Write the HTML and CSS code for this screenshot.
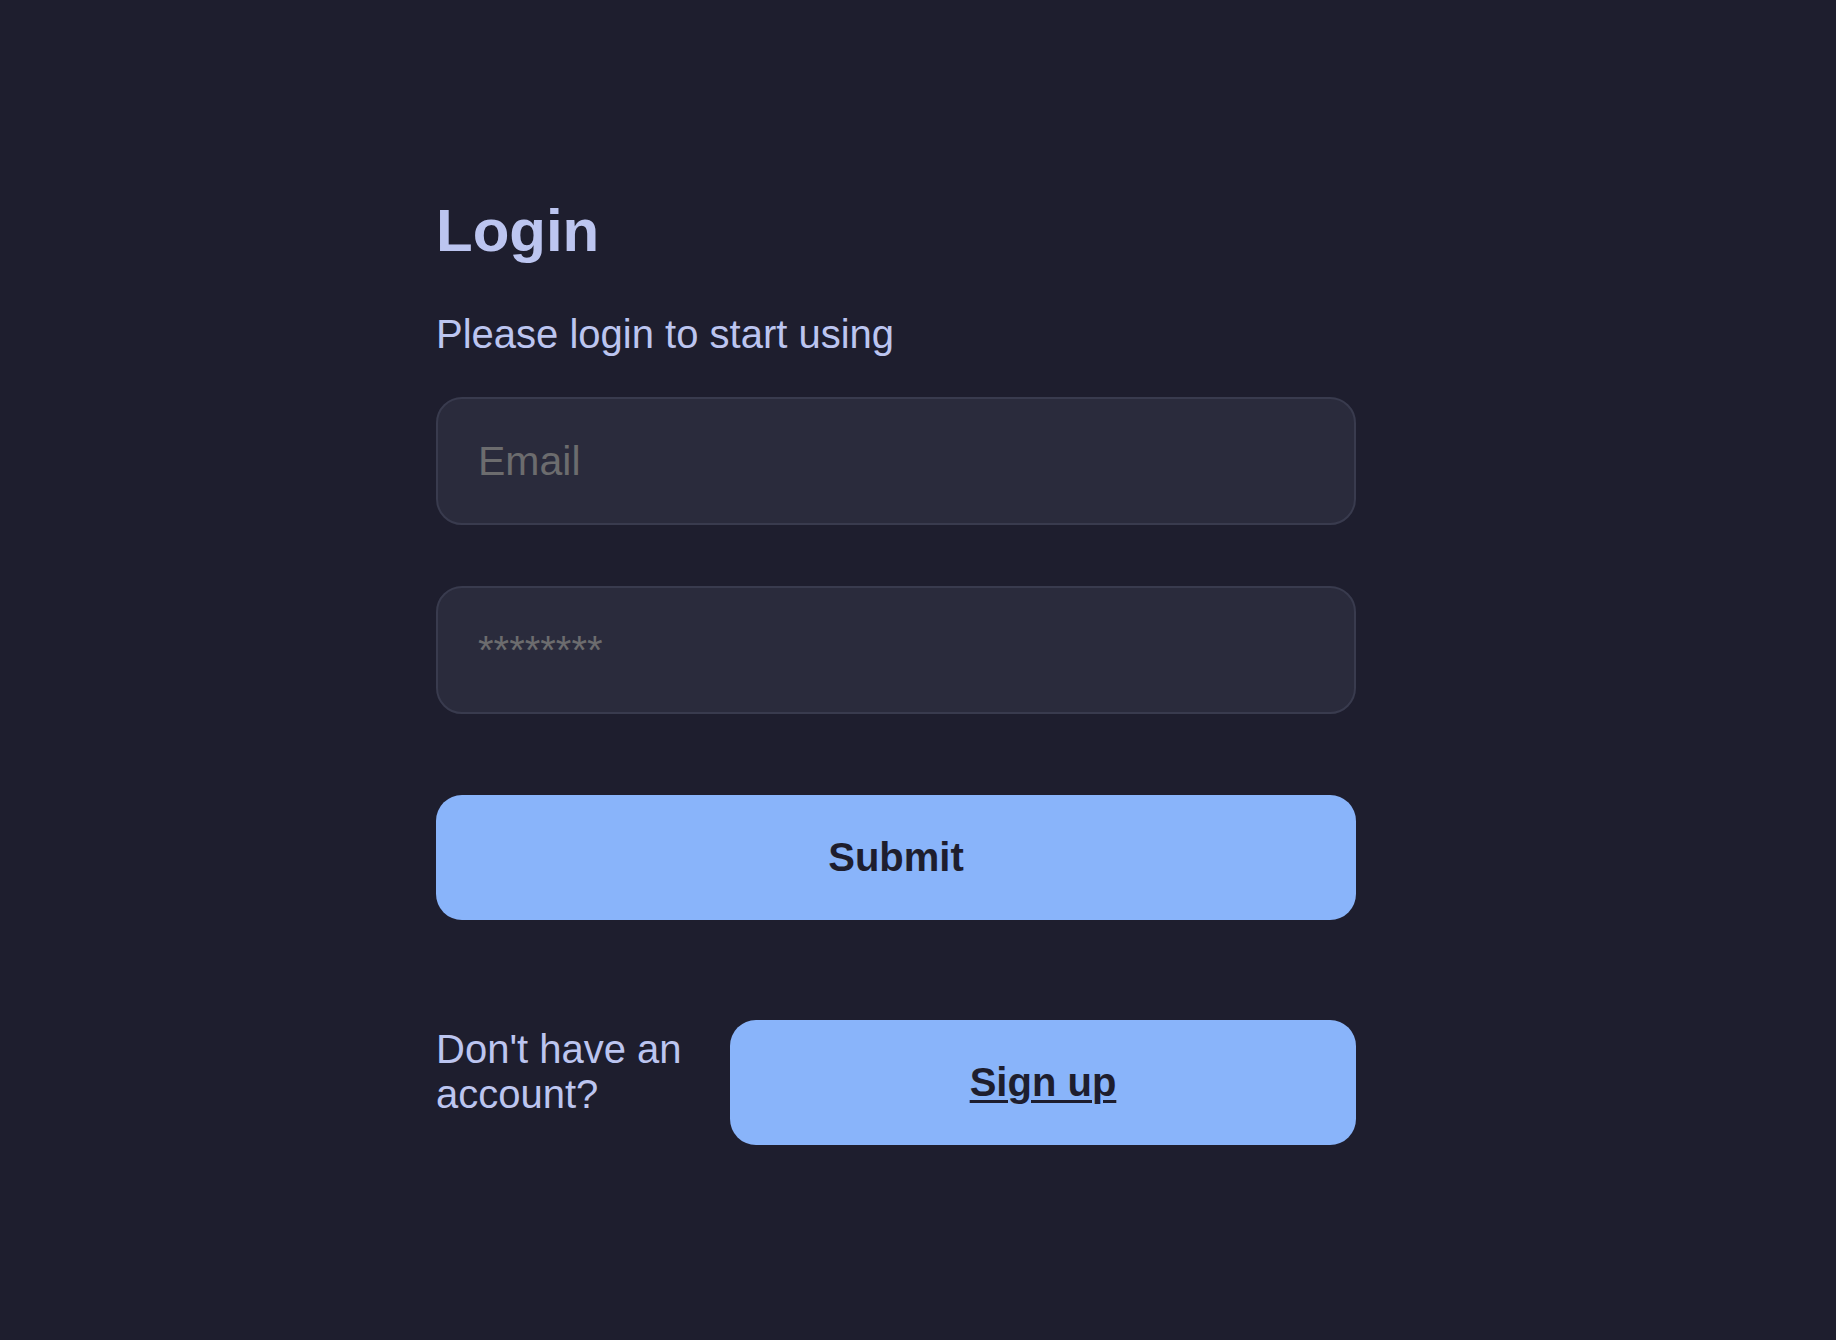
FILE: index.html
```html
<!DOCTYPE html>
<html lang="en">
<head>
<meta charset="utf-8">
<title>Login</title>
<link rel="stylesheet" href="styles.css">
</head>
<body>
<main class="page">
  <form class="login">
    <h1 class="title">Login</h1>
    <p class="subtitle">Please login to start using</p>
    <input class="field field-email" type="email" placeholder="Email">
    <input class="field field-pass" type="password" placeholder="********">
    <button class="btn btn-submit" type="button">Submit</button>
    <div class="signup-row">
      <p class="signup-text">Don't have an account?</p>
      <a class="btn btn-signup" href="#">Sign up</a>
    </div>
  </form>
</main>
</body>
</html>
```

FILE: styles.css
```css
html, body {
  margin: 0;
  padding: 0;
  background: #1e1e2e;
}

body {
  font-family: "Liberation Sans", Arial, Helvetica, sans-serif;
  color: #bcc5f0;
}

.page {
  padding: 196px 0 0 436px;
}

.login {
  width: 920px;
  display: flex;
  flex-direction: column;
}

.title {
  margin: 0;
  font-size: 60px;
  line-height: 70px;
  font-weight: 700;
  color: #bcc5f0;
}

.subtitle {
  margin: 45px 0 0;
  font-size: 40px;
  line-height: 46px;
  color: #bcc5f0;
}

.field {
  box-sizing: border-box;
  width: 100%;
  height: 128px;
  margin: 40px 0 0;
  padding: 0 40px;
  background: #2a2b3c;
  border: 2px solid #393b4e;
  border-radius: 26px;
  font-family: "Liberation Sans", Arial, sans-serif;
  font-size: 41px;
  color: #cdd6f4;
  outline: none;
}

.field::placeholder {
  color: #6c6c6e;
  opacity: 1;
}

.field-pass {
  margin-top: 61px;
  font-size: 40px;
}

.btn {
  box-sizing: border-box;
  display: flex;
  align-items: center;
  justify-content: center;
  height: 125px;
  background: #89b4fa;
  border: none;
  border-radius: 26px;
  font-family: "Liberation Sans", Arial, sans-serif;
  font-size: 40px;
  font-weight: 700;
  color: #1e1e2e;
  padding: 0;
}

.btn-submit {
  width: 100%;
  margin-top: 81px;
}

.signup-row {
  display: flex;
  align-items: flex-start;
  gap: 34px;
  margin-top: 100px;
}

.signup-text {
  flex: 0 0 260px;
  margin: 7px 0 0;
  font-size: 40px;
  line-height: 45px;
  color: #bcc5f0;
}

.btn-signup {
  flex: 1 1 auto;
  text-decoration: underline;
  text-decoration-thickness: 3px;
  text-underline-offset: 4px;
}
```
